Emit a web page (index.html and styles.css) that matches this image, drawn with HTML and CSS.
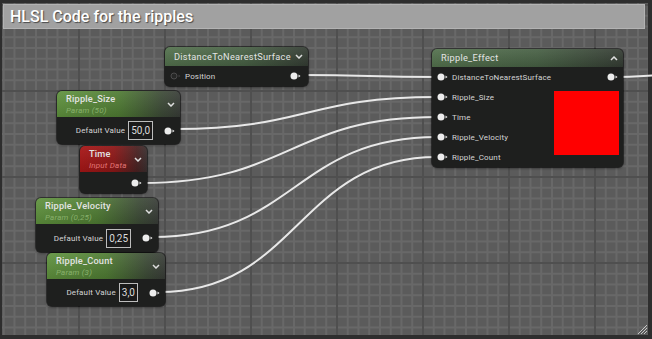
FILE: index.html
```html
<!DOCTYPE html>
<html lang="en">
<head>
  <meta charset="UTF-8">
  <meta name="viewport" content="width=device-width, initial-scale=1">
  <title>HLSL Code for the ripples</title>
  <link rel="stylesheet" href="styles.css">
</head>
<body>
  <div class="editor">
    <div class="comment">
      <div class="comment-title">HLSL Code for the ripples</div>
      <div class="graph"></div>
    </div>

    <svg class="wires" width="652" height="339" viewBox="0 0 652 339">
      <path d="M301,75 C369,75 369,77 437,77"/>
      <path d="M175,129 C306,129 306,97 437,97"/>
      <path d="M142,183 C290,183 290,117 437,117"/>
      <path d="M153,237 C295,237 295,137 437,137"/>
      <path d="M159,292 C298,292 298,157 437,157"/>
      <path d="M616,77 C635,77 640,76 660,75"/>
    </svg>

    <!-- custom expression input -->
    <div class="node n-distance">
      <div class="node-head head-func">
        <div class="node-title">DistanceToNearestSurface</div>
        <svg class="chev" width="8" height="5" viewBox="0 0 8 5"><polyline points="1,1 4,4 7,1"/></svg>
      </div>
      <div class="node-body row-between">
        <div class="pin-row">
          <svg class="pin pin-empty" width="11" height="8" viewBox="0 0 11 8"><circle cx="4" cy="4" r="3"/><polygon points="8.5,2.5 10.5,4 8.5,5.5"/></svg>
          <span class="label">Position</span>
        </div>
        <svg class="pin" width="11" height="8" viewBox="0 0 11 8"><circle cx="4" cy="4" r="3.5"/><polygon points="8.5,2.5 10.5,4 8.5,5.5"/></svg>
      </div>
    </div>

    <div class="node n-size">
      <div class="node-head head-param">
        <div>
          <div class="node-title">Ripple_Size</div>
          <div class="node-sub">Param (50)</div>
        </div>
        <svg class="chev" width="8" height="5" viewBox="0 0 8 5"><polyline points="1,1 4,4 7,1"/></svg>
      </div>
      <div class="node-body param-body">
        <span class="label">Default Value</span>
        <span class="value">50,0</span>
        <svg class="pin" width="11" height="8" viewBox="0 0 11 8"><circle cx="4" cy="4" r="3.5"/><polygon points="8.5,2.5 10.5,4 8.5,5.5"/></svg>
      </div>
    </div>

    <div class="node n-time">
      <div class="node-head head-input">
        <div>
          <div class="node-title">Time</div>
          <div class="node-sub">Input Data</div>
        </div>
        <svg class="chev" width="8" height="5" viewBox="0 0 8 5"><polyline points="1,1 4,4 7,1"/></svg>
      </div>
      <div class="node-body param-body">
        <svg class="pin" width="11" height="8" viewBox="0 0 11 8"><circle cx="4" cy="4" r="3.5"/><polygon points="8.5,2.5 10.5,4 8.5,5.5"/></svg>
      </div>
    </div>

    <div class="node n-velocity">
      <div class="node-head head-param">
        <div>
          <div class="node-title">Ripple_Velocity</div>
          <div class="node-sub">Param (0,25)</div>
        </div>
        <svg class="chev" width="8" height="5" viewBox="0 0 8 5"><polyline points="1,1 4,4 7,1"/></svg>
      </div>
      <div class="node-body param-body">
        <span class="label">Default Value</span>
        <span class="value">0,25</span>
        <svg class="pin" width="11" height="8" viewBox="0 0 11 8"><circle cx="4" cy="4" r="3.5"/><polygon points="8.5,2.5 10.5,4 8.5,5.5"/></svg>
      </div>
    </div>

    <div class="node n-count">
      <div class="node-head head-param">
        <div>
          <div class="node-title">Ripple_Count</div>
          <div class="node-sub">Param (3)</div>
        </div>
        <svg class="chev" width="8" height="5" viewBox="0 0 8 5"><polyline points="1,1 4,4 7,1"/></svg>
      </div>
      <div class="node-body param-body">
        <span class="label">Default Value</span>
        <span class="value">3,0</span>
        <svg class="pin" width="11" height="8" viewBox="0 0 11 8"><circle cx="4" cy="4" r="3.5"/><polygon points="8.5,2.5 10.5,4 8.5,5.5"/></svg>
      </div>
    </div>

    <div class="node n-effect">
      <div class="node-head head-func">
        <div class="node-title">Ripple_Effect</div>
        <svg class="chev" width="8" height="5" viewBox="0 0 8 5"><polyline points="1,4 4,1 7,4"/></svg>
      </div>
      <div class="node-body effect-body">
        <div class="pin-row">
          <svg class="pin" width="11" height="8" viewBox="0 0 11 8"><circle cx="4" cy="4" r="3.5"/><polygon points="8.5,2.5 10.5,4 8.5,5.5"/></svg>
          <span class="label">DistanceToNearestSurface</span>
        </div>
        <svg class="pin out-pin" width="11" height="8" viewBox="0 0 11 8"><circle cx="4" cy="4" r="3.5"/><polygon points="8.5,2.5 10.5,4 8.5,5.5"/></svg>
        <div class="pin-row">
          <svg class="pin" width="11" height="8" viewBox="0 0 11 8"><circle cx="4" cy="4" r="3.5"/><polygon points="8.5,2.5 10.5,4 8.5,5.5"/></svg>
          <span class="label">Ripple_Size</span>
        </div>
        <div class="preview"></div>
        <div class="pin-row">
          <svg class="pin" width="11" height="8" viewBox="0 0 11 8"><circle cx="4" cy="4" r="3.5"/><polygon points="8.5,2.5 10.5,4 8.5,5.5"/></svg>
          <span class="label">Time</span>
        </div>
        <div class="pin-row">
          <svg class="pin" width="11" height="8" viewBox="0 0 11 8"><circle cx="4" cy="4" r="3.5"/><polygon points="8.5,2.5 10.5,4 8.5,5.5"/></svg>
          <span class="label">Ripple_Velocity</span>
        </div>
        <div class="pin-row">
          <svg class="pin" width="11" height="8" viewBox="0 0 11 8"><circle cx="4" cy="4" r="3.5"/><polygon points="8.5,2.5 10.5,4 8.5,5.5"/></svg>
          <span class="label">Ripple_Count</span>
        </div>
      </div>
    </div>

    <svg class="resize" width="10" height="10" viewBox="0 0 10 10">
      <line x1="1" y1="10" x2="10" y2="1"/>
      <line x1="4" y1="10" x2="10" y2="4"/>
      <line x1="7" y1="10" x2="10" y2="7"/>
    </svg>
  </div>
</body>
</html>
```

FILE: styles.css
```css
body {
  margin: 0;
  font-family: 'Roboto', 'Liberation Sans', sans-serif;
  background-color: #2e2e2e;
  overflow: hidden;
}

.editor {
  position: relative;
  width: 652px;
  height: 339px;
  padding: 3px 4px 4px 2px;
  box-sizing: border-box;
}

.comment {
  display: flex;
  flex-direction: column;
  height: 100%;
  background-color: #5b5b5b;
  background-image:
    linear-gradient(to right, #4f4f4f 2px, transparent 2px),
    linear-gradient(to bottom, #4f4f4f 2px, transparent 2px),
    linear-gradient(to right, #686868 2px, transparent 2px),
    linear-gradient(to bottom, #686868 2px, transparent 2px);
  background-size: 86px 86px, 86px 86px, 10.75px 10.75px, 10.75px 10.75px;
  background-position: 76px 1px, 76px 1px, 76px 1px, 76px 1px;
}

.comment-title {
  margin: 1px 3px 1px 1px;
  height: 23px;
  background: #a1a1a1;
  border: 1px solid #b3b3b3;
  color: #fff;
  font-size: 16px;
  font-weight: 500;
  line-height: 23px;
  padding-left: 6px;
  text-shadow: 1px 1px 1px rgba(0, 0, 0, 0.55);
}

.graph {
  flex: 1;
}

.wires {
  position: absolute;
  left: 0;
  top: 0;
}

.wires path {
  fill: none;
  stroke: #e8e8e8;
  stroke-width: 2;
}

.node {
  position: absolute;
  display: flex;
  flex-direction: column;
  background: #1e1f1e;
  border-radius: 5px;
  overflow: hidden;
  box-shadow: 0 1px 3px rgba(0, 0, 0, 0.6), 0 0 0 1px rgba(0, 0, 0, 0.45);
  color: #d6d6d6;
}

.node-head {
  display: flex;
  align-items: center;
  justify-content: space-between;
  padding: 0 5px 0 9px;
  box-sizing: border-box;
}

.head-func {
  height: 19px;
  background:
    linear-gradient(to bottom, rgba(255, 255, 255, 0.08), rgba(0, 0, 0, 0.1)),
    linear-gradient(to right, #52704c 0%, #465f43 55%, #333b32 100%);
}

.head-param {
  height: 26px;
  background:
    linear-gradient(to bottom, rgba(255, 255, 255, 0.08), rgba(0, 0, 0, 0.12)),
    linear-gradient(to right, #5f923d 0%, #4f7c33 50%, #3c4a36 85%, #383c37 100%);
}

.head-input {
  height: 26px;
  background:
    linear-gradient(to bottom, rgba(255, 255, 255, 0.06), rgba(0, 0, 0, 0.12)),
    linear-gradient(to right, #a91616 0%, #8e1717 50%, #4a2222 85%, #3a2f2f 100%);
}

.node-title {
  font-size: 9.2px;
  font-weight: 500;
  line-height: 12px;
  letter-spacing: 0.2px;
  color: #e4e4e4;
}

.head-func .node-title {
  font-weight: 400;
  letter-spacing: 0.3px;
}

.node-sub {
  font-size: 8px;
  font-style: italic;
  line-height: 11px;
  letter-spacing: 0.2px;
  color: #88b06c;
}

.head-input .node-sub {
  color: #e27676;
}

.chev {
  flex: none;
}

.chev polyline {
  fill: none;
  stroke: #dedede;
  stroke-width: 1.5;
}

.node-body {
  flex: 1;
  display: flex;
  align-items: center;
}

.row-between {
  justify-content: space-between;
  padding: 0 7px 0 5px;
}

.param-body {
  justify-content: flex-end;
  padding-right: 5px;
}

.param-body .value {
  margin: 0 11px 0 3px;
}

.pin-row {
  display: flex;
  align-items: center;
  gap: 4px;
}

.pin {
  flex: none;
  fill: #ececec;
}

.pin-empty circle {
  fill: #262726;
  stroke: #4c4c4c;
}

.pin-empty polygon {
  fill: #3c3c3c;
}

.label {
  font-size: 8px;
  letter-spacing: 0.15px;
  color: #d4d4d4;
}

.value {
  font-size: 10px;
  line-height: 17px;
  padding: 0 2px;
  border: 1px solid #bdbdbd;
  color: #dcdcdc;
  background: #1a1a1a;
}

.effect-body {
  display: grid;
  grid-template-columns: 1fr auto;
  grid-template-rows: repeat(5, 20px);
  align-items: center;
  padding: 0 4px 0 5px;
}

.out-pin {
  justify-self: end;
  margin-right: 1px;
}

.preview {
  grid-column: 2;
  grid-row: 2 / span 4;
  align-self: start;
  width: 65px;
  height: 64px;
  margin-top: 4px;
  background: #ff0000;
}

.effect-body .pin-row {
  grid-column: 1;
}

.n-distance { left: 165px; top: 47px; width: 143px; height: 39px; }
.n-size { left: 57px; top: 91px; width: 123px; height: 53px; }
.n-time { left: 80px; top: 146px; width: 67px; height: 47px; }
.n-velocity { left: 36px; top: 198px; width: 122px; height: 54px; }
.n-count { left: 47px; top: 253px; width: 118px; height: 53px; }
.n-effect { left: 432px; top: 49px; width: 191px; height: 118px; }

.n-effect .head-func {
  height: 18px;
}

.resize {
  position: absolute;
  left: 637px;
  top: 324px;
}

.resize line {
  stroke: #c8c8c8;
  stroke-width: 1;
}
```
